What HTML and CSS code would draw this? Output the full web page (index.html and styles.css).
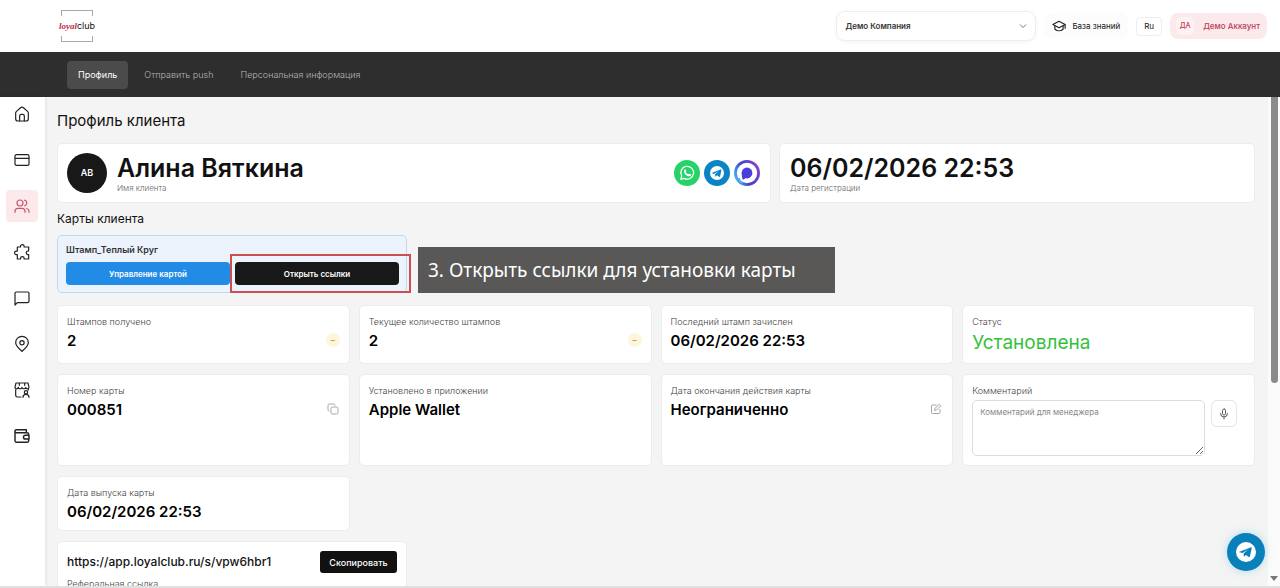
FILE: index.html
```html
<!DOCTYPE html>
<html lang="ru">
<head>
<meta charset="utf-8">
<meta name="viewport" content="width=device-width, initial-scale=1">
<title>Профиль клиента</title>
<link rel="stylesheet" href="styles.css">
</head>
<body>
<header class="topbar">
  <a class="logo" href="#" aria-label="loyalclub"><span class="logo-text"><i>loyal</i>club</span></a>
  <div class="topbar-tools">
    <div class="company">
      <select class="company-select" aria-label="Компания"><option>Демо Компания</option></select>
      <svg class="chevron" viewBox="0 0 8 8" fill="none" stroke="#777"><path d="M1 2.5 4 5.5 7 2.5"/></svg>
    </div>
    <a class="knowledge" href="#">
      <svg width="14" height="14" viewBox="0 0 24 24" fill="none" stroke="#222" stroke-width="2" stroke-linejoin="round" stroke-linecap="round"><path d="M12 4 1.5 9.5 12 15l10.500-5.500z"/><path d="M5 12v5.500c4 3.500 10 3.500 14 0V12M22.500 10v6"/></svg>
      База знаний
    </a>
    <button class="lang" type="button">Ru</button>
    <button class="account" type="button"><span class="account-initials">ДА</span>Демо Аккаунт</button>
  </div>
</header>
<nav class="tabs">
  <a class="tab tab-active" href="#">Профиль</a>
  <a class="tab" href="#">Отправить push</a>
  <a class="tab" href="#">Персональная информация</a>
</nav>
<div class="body">
  <aside class="sidebar">
    <a class="side-link" href="#" aria-label="Главная"><svg class="side-icon" viewBox="0 0 24 24"><path d="M2.500 10.500c0-1 .4-1.700 1.200-2.400l6.100-5.500c1.300-1.100 3.100-1.100 4.400 0l6.100 5.500c.8.7 1.200 1.400 1.200 2.400V19c0 2.200-1.300 3.500-3.500 3.500H6c-2.200 0-3.500-1.300-3.500-3.500z"/><path d="M8.500 22.500V15c0-1.700 1-2.500 2.500-2.500h2c1.500 0 2.500.8 2.500 2.500v7.500"/></svg></a>
    <a class="side-link" href="#" aria-label="Карты"><svg class="side-icon" viewBox="0 0 24 24"><rect x="1.500" y="4" width="21" height="16" rx="2"/><path d="M1.500 9.500h21"/></svg></a>
    <a class="side-link side-active" href="#" aria-label="Клиенты"><svg class="side-icon" viewBox="0 0 24 24"><circle cx="9" cy="7.500" r="4.500"/><path d="M1.500 21.500v-1.500c0-3 2-4.500 4.500-4.500h6c2.500 0 4.500 1.500 4.500 4.500v1.500M16 3.200a4.500 4.500 0 0 1 0 8.600M19 15.700c2.200.6 3.500 2.100 3.500 4.300v1.500"/></svg></a>
    <a class="side-link" href="#" aria-label="Интеграции"><svg class="side-icon" viewBox="0 0 24 24"><path d="M5 4.500h4.800V3.500a2.700 2.700 0 0 1 5.400 0v1H22V10.500h-1a2.700 2.700 0 0 0 0 5.400h1V22.500h-6.800v-1a2.700 2.700 0 0 0-5.400 0v1H5V16H3.500a2.700 2.700 0 0 1 0-5.400H5z"/></svg></a>
    <a class="side-link" href="#" aria-label="Сообщения"><svg class="side-icon" viewBox="0 0 24 24"><path d="M1.500 22.500V5c0-1.200.8-2 2-2h17c1.200 0 2 .8 2 2v12c0 1.200-.8 2-2 2H5z"/></svg></a>
    <a class="side-link" href="#" aria-label="Локации"><svg class="side-icon" viewBox="0 0 24 24"><path d="M12 23c5-4.500 9.500-8.500 9.500-13a9.500 9.500 0 0 0-19 0c0 4.500 4.500 8.500 9.500 13z"/><circle cx="12" cy="10" r="3.200"/></svg></a>
    <a class="side-link" href="#" aria-label="Магазин"><svg class="side-icon" viewBox="0 0 24 24"><path d="M3 1.500h18L22.500 8c0 3-5 3-5 0 0 3-5.500 3-5.500 0 0 3-5.500 3-5.500 0 0 3-5 3-5 0zM8 1.500V5M16 1.500V5M2.500 12v8c0 1.500.8 2.500 2.500 2.500h5.500M21.500 10.500V12"/><circle cx="18" cy="15.500" r="2.500"/><path d="M13.500 23c0-3 2-4.500 4.500-4.500s4.500 1.500 4.500 4.500"/></svg></a>
    <a class="side-link" href="#" aria-label="Кошелёк"><svg class="side-icon" viewBox="0 0 24 24"><path d="M1.500 4.500V19c0 1.500.9 2.500 2.500 2.500h15.500c1.500 0 2.500-1 2.500-2.500v-2.500M1.500 4.500c0-1.200.9-2 2-2H18.500v4.500M1.500 4.500c0 1.500.9 2.500 2 2.500h16c1.500 0 2.500.8 2.500 2.500V11M22.500 11H17a2.700 2.700 0 0 0 0 5.500h5.500z" stroke-width="2.200"/></svg></a>
  </aside>
  <main class="content">
    <h1 class="page-title">Профиль клиента</h1>
    <div class="summary">
      <section class="card client">
        <span class="avatar">АВ</span>
        <div class="client-info">
          <h2 class="headline">Алина Вяткина</h2>
          <p class="caption">Имя клиента</p>
        </div>
        <div class="messengers">
          <a href="#" aria-label="WhatsApp"><svg class="messenger" viewBox="0 0 26 26"><circle cx="13" cy="13" r="13" fill="#25d366"/><path d="m6.800 19.400.9-3.400a6.400 6.400 0 1 1 2.500 2.400z" fill="none" stroke="#fff" stroke-width="1.300" stroke-linejoin="round"/><path d="M10.400 9.700c.5-.7 1.100-.5 1.400.2l.5 1.100c.1.400-.2.700-.6 1.100.7 1.200 1.500 1.900 2.600 2.300.5-.6.800-.9 1.200-.7l1.300.6c.5.300.4.900 0 1.400-.9 1-2.300.8-4.100-.3-1.700-1.100-3.500-3.700-2.300-5.700z" fill="#fff"/></svg></a>
          <a href="#" aria-label="Telegram"><svg class="messenger" viewBox="0 0 26 26"><circle cx="13" cy="13" r="13" fill="#0a84c4"/><circle cx="13" cy="13" r="7" fill="#fff"/><path d="m8.200 12.800 8.500-3.400c.5-.2.800.1.700.7l-1.300 6.300c-.1.600-.6.700-1 .4l-2.100-1.600-1.200 1.200c-.3.300-.6.200-.6-.2l-.2-1.800 3.400-3.200-4.300 2.800-1.800-.7c-.4-.1-.4-.4-.1-.5z" fill="#0a84c4"/></svg></a>
          <a href="#" aria-label="MAX"><svg class="messenger" viewBox="0 0 26 26"><defs><linearGradient id="ring" x1="0" y1=".7" x2="1" y2=".3"><stop offset="0" stop-color="#45bff5"/><stop offset=".4" stop-color="#3e45cf"/><stop offset="1" stop-color="#8442ce"/></linearGradient></defs><circle cx="13" cy="13" r="13" fill="url(#ring)"/><circle cx="13" cy="13" r="10.200" fill="#fff"/><circle cx="13" cy="13" r="5.400" fill="#473fdd"/><path d="M7.800 13c0 2.500.1 5 1 6.500 1 .5 2-.6 2.600-1.800z" fill="#473fdd"/><path d="M5 18c.3 3 1.500 4.500 3.500 4.500" stroke="#56adf0" stroke-width="2" fill="none"/></svg></a>
        </div>
      </section>
      <section class="card registered">
        <h2 class="headline">06/02/2026 22:53</h2>
        <p class="caption">Дата регистрации</p>
      </section>
    </div>
    <h2 class="section-title">Карты клиента</h2>
    <section class="client-card">
      <h3 class="client-card-name">Штамп_Теплый Круг</h3>
      <div class="client-card-actions">
        <button class="action action-blue" type="button">Управление картой</button>
        <button class="action action-black" type="button">Открыть ссылки</button>
      </div>
      <span class="highlight"></span>
      <p class="hint">3. Открыть ссылки для установки карты</p>
    </section>
    <div class="stats">
      <section class="card"><h3 class="label">Штампов получено</h3><div class="row"><p class="value">2</p><button class="minus" type="button" aria-label="Списать">−</button></div></section>
      <section class="card"><h3 class="label">Текущее количество штампов</h3><div class="row"><p class="value">2</p><button class="minus" type="button" aria-label="Списать">−</button></div></section>
      <section class="card"><h3 class="label">Последний штамп зачислен</h3><p class="value">06/02/2026 22:53</p></section>
      <section class="card"><h3 class="label">Статус</h3><p class="value status">Установлена</p></section>
      <section class="card"><h3 class="label">Номер карты</h3><div class="row"><p class="value">000851</p><button class="icon-button" type="button" aria-label="Копировать"><svg width="12" height="12" viewBox="0 0 12 12" fill="none" stroke="#a5a5a5"><rect x="4" y="4" width="7" height="7" rx="1.500"/><path d="M2.500 8C1.500 8 1 7.500 1 6.500v-4C1 1.500 1.500 1 2.500 1h4C7.500 1 8 1.500 8 2.500"/></svg></button></div></section>
      <section class="card"><h3 class="label">Установлено в приложении</h3><p class="value">Apple Wallet</p></section>
      <section class="card"><h3 class="label">Дата окончания действия карты</h3><div class="row"><p class="value">Неограниченно</p><button class="icon-button" type="button" aria-label="Изменить"><svg width="12" height="12" viewBox="0 0 12 12" fill="none" stroke="#a5a5a5"><path d="M6.500 2H2.500C2 2 1.500 2.500 1.500 3v6.500c0 .6.400 1 1 1H9c.6 0 1-.4 1-1V6"/><path d="m4.500 7.500.4-2 4.300-4.200 1.500 1.500-4.200 4.300z"/></svg></button></div></section>
      <section class="card">
        <label class="label" for="comment">Комментарий</label>
        <div class="comment-row">
          <textarea class="comment" id="comment" placeholder="Комментарий для менеджера"></textarea>
          <button class="mic" type="button" aria-label="Записать голосом"><svg width="12" height="12" viewBox="0 0 12 12" fill="none" stroke="#555" stroke-linecap="round"><rect x="4.500" y="1" width="3" height="6" rx="1.500"/><path d="M2.500 5.500a3.500 3.500 0 0 0 7 0M6 9v2"/></svg></button>
        </div>
      </section>
      <section class="card"><h3 class="label">Дата выпуска карты</h3><p class="value">06/02/2026 22:53</p></section>
    </div>
    <section class="card referral">
      <div class="referral-info">
        <p class="referral-url">https://app.loyalclub.ru/s/vpw6hbr1</p>
        <p class="label">Реферальная ссылка</p>
      </div>
      <button class="copy" type="button">Скопировать</button>
    </section>
  </main>
  <div class="scroll-track"><span class="scroll-thumb"></span><span class="scroll-arrow"></span></div>
</div>
<div class="bottom-edge"></div>
<a class="chat" href="#" aria-label="Telegram"><svg width="20" height="20" viewBox="0 0 20 20"><circle cx="10" cy="10" r="10" fill="#fff"/><path d="m3.500 9.700 11.500-4.500c.6-.2 1 .1.800.8l-1.900 8.600c-.1.600-.6.800-1.100.4l-2.900-2-1.400 1.300c-.3.300-.7.200-.7-.3l-.2-2.500 4.900-4.200-6 3.600-2.900-.6c-.5-.1-.5-.4-.1-.6z" fill="#0a80bb"/></svg></a>
</body>
</html>
```

FILE: styles.css
```css
* { box-sizing: border-box; }

body {
  margin: 0;
  height: 100vh;
  display: flex;
  flex-direction: column;
  overflow: hidden;
  font-family: Inter, Roboto, "Liberation Sans", sans-serif;
  font-size: 9px;
  color: #111;
  background: #fff;
}

h1, h2, h3, p { margin: 0; font-weight: 400; }
a { color: inherit; text-decoration: none; }
button, select, textarea { font: inherit; color: inherit; margin: 0; }
button { padding: 0; border: 0; background: none; }
svg { display: block; }

.topbar {
  flex: none;
  height: 52px;
  display: flex;
  align-items: center;
  justify-content: space-between;
  padding: 0 13px 0 61px;
}

.logo {
  width: 32px;
  height: 32px;
  border: 1px solid #aaa;
  display: flex;
  align-items: center;
  justify-content: center;
}
.logo-text {
  flex: none;
  padding: 5px 0;
  background: #fff;
  font-size: 9px;
  line-height: 10px;
}
.logo-text i { font-family: "Liberation Serif", serif; color: #c4284c; font-size: 9px; font-weight: 700; }

.topbar-tools { display: flex; align-items: center; gap: 8px; }
.company { position: relative; width: 200px; }
.company-select {
  appearance: none;
  width: 100%;
  height: 30px;
  padding: 0 8px;
  border: 1px solid #eee;
  border-radius: 9px;
  background: #fff;
  box-shadow: 0 1px 4px #0000000d;
  font-size: 8px;
  font-weight: 600;
  color: #333;
}
.chevron { position: absolute; right: 9px; top: 11px; width: 8px; height: 8px; }
.knowledge {
  height: 26px;
  padding: 0 8px;
  display: flex;
  align-items: center;
  gap: 6px;
  border-radius: 8px;
  background: #fcfcfc;
  font-size: 8px;
}
.lang {
  width: 26px;
  height: 19px;
  border: 1px solid #eee;
  border-radius: 4px;
  font-size: 8px;
}
.account {
  height: 26px;
  padding: 0 7px 0 6px;
  display: flex;
  align-items: center;
  gap: 9px;
  border-radius: 8px;
  background: #fbe9eb;
  color: #bd4058;
  font-size: 8px;
  font-weight: 500;
}
.account-initials {
  width: 18px;
  height: 18px;
  border-radius: 5px;
  background: #fdf1f2;
  font-size: 7px;
  line-height: 18px;
  text-align: center;
}

.tabs {
  flex: none;
  height: 45px;
  display: flex;
  align-items: center;
  gap: 5px;
  padding: 0 67px;
  background: #2e2e2e;
}
.tab {
  padding: 0 11px;
  border-radius: 4px;
  color: #b4b4b4;
  font-weight: 300;
  line-height: 28px;
}
.tab-active { background: #4b4b4b; color: #fff; font-weight: 400; }

.body { flex: 1; min-height: 0; display: flex; background: #f4f4f4; }

.sidebar {
  flex: none;
  width: 45px;
  display: flex;
  flex-direction: column;
  gap: 14px;
  padding: 1px 6px;
  background: #fff;
  box-shadow: 0 0 4px #0000001f;
}
.side-link {
  width: 32px;
  height: 32px;
  display: grid;
  place-items: center;
  border-radius: 4px;
  color: #222;
}
.side-active { background: #fce9eb; color: #c9566c; }
.side-icon { width: 16px; height: 16px; fill: none; stroke: currentColor; stroke-width: 1.800; stroke-linejoin: round; stroke-linecap: round; overflow: visible; }

.content { flex: 1; min-width: 0; overflow: hidden; padding: 12px 13px 0 12px; }

.page-title { font-size: 15px; line-height: 24px; margin-bottom: 10px; }

.card {
  padding: 9px 9px 7px;
  border: 1px solid #ececec;
  border-radius: 5px;
  background: #fff;
}

.summary { display: grid; grid-template-columns: 3fr 2fr; gap: 8px; }
.client { display: flex; align-items: center; gap: 10px; padding: 9px 10px 9px 9px; }
.registered { padding: 9px 10px; }
.avatar {
  width: 40px;
  height: 40px;
  border-radius: 50%;
  background: #181818;
  color: #fff;
  font-size: 9px;
  font-weight: 600;
  line-height: 40px;
  text-align: center;
}
.client-info { flex: 1; }
.headline { font-size: 25px; line-height: 30px; font-weight: 600; }
.caption { font-size: 8px; line-height: 10px; font-weight: 300; color: #666; }
.messengers { display: flex; gap: 4px; }
.messenger { width: 26px; height: 26px; }

.section-title { font-size: 12px; line-height: 20px; margin: 6px 0; }

.client-card {
  position: relative;
  width: 350px;
  padding: 8px 7px 7px 8px;
  border: 1px solid #bfd6f7;
  border-radius: 5px;
  background: #edf3fd;
}
.client-card-name { font-size: 9px; line-height: 12px; font-weight: 600; color: #333; margin-bottom: 6px; }
.client-card-actions { display: flex; gap: 5px; }
.action { flex: 1; height: 23px; border-radius: 4px; color: #fff; font-size: 8px; font-weight: 600; }
.action-blue { background: #228be6; }
.action-black { background: #181818; }
.highlight {
  position: absolute;
  left: 172px;
  top: 18px;
  width: 181px;
  height: 39px;
  border: 2px solid #c9504e;
}
.hint {
  position: absolute;
  left: 360px;
  top: 11px;
  width: 417px;
  padding: 0 10px;
  background: #595856;
  color: #fff;
  font-family: "Noto Sans", "Open Sans", sans-serif;
  font-size: 19px;
  line-height: 46px;
  white-space: nowrap;
}

.stats { display: grid; grid-template-columns: repeat(4, 1fr); gap: 10px 9px; margin: 12px 0 10px; }
.label { display: block; font-size: 9px; line-height: 13px; font-weight: 300; color: #444; }
.row { display: flex; align-items: center; justify-content: space-between; }
.value { margin-top: 2px; font-size: 15px; line-height: 22px; font-weight: 600; color: #000; }
.status { font-size: 19px; line-height: 26px; font-weight: 400; color: #34c13a; }
.minus {
  width: 14px;
  height: 14px;
  border-radius: 50%;
  background: #fef6dc;
  color: #aa9345;
  font-size: 9px;
  line-height: 14px;
}
.icon-button { padding: 0 1px; }
.comment-row { display: flex; align-items: flex-start; gap: 6px; margin: 3px 0 2px; }
.comment {
  width: 233px;
  height: 56px;
  padding: 6px 7px;
  border: 1px solid #ddd;
  border-radius: 5px;
  font-size: 8px;
  background: #fff;
}
.comment::placeholder { color: #888; }
.mic {
  width: 26px;
  height: 27px;
  display: grid;
  place-items: center;
  border: 1px solid #e4e4e4;
  border-radius: 6px;
}

.referral { width: 350px; display: flex; align-items: flex-start; justify-content: space-between; padding: 9px; }
.referral-url { font-size: 12px; line-height: 22px; font-weight: 500; margin-bottom: 4px; }
.copy {
  width: 77px;
  height: 22px;
  border-radius: 3px;
  background: #111;
  color: #fff;
  font-weight: 500;
}

.scroll-track {
  flex: none;
  width: 12px;
  display: flex;
  flex-direction: column;
  align-items: center;
  justify-content: space-between;
  padding-bottom: 5px;
  background: #fbfbfb;
}
.scroll-thumb { width: 7px; height: 59%; border-radius: 0 0 4px 4px; background: #8b8b8b; }
.scroll-arrow { border: 4px solid transparent; border-top: 5px solid #777; border-bottom: 0; }

.bottom-edge { flex: none; height: 2px; background: #dfe1df; }

.chat {
  position: fixed;
  right: 15px;
  bottom: 17px;
  width: 38px;
  height: 38px;
  display: grid;
  place-items: center;
  border-radius: 50%;
  background: #0a80bb;
  box-shadow: 0 0 8px #6cc6ee80;
}
```
